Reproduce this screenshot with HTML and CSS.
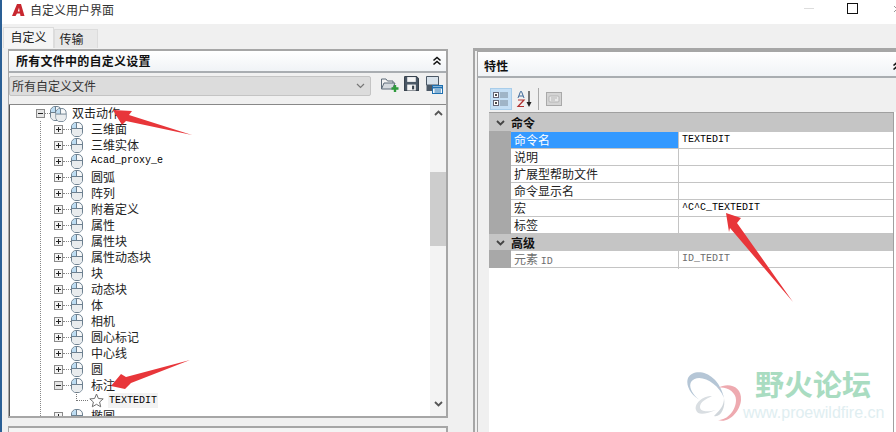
FILE: index.html
```html
<!DOCTYPE html>
<html lang="zh">
<head>
<meta charset="utf-8">
<title>自定义用户界面</title>
<link rel="stylesheet" href="styles.css">
</head>
<body>
<svg class="defs" width="0" height="0">
  <symbol id="mouse" viewBox="0 0 12 15">
    <rect x="0.5" y="0.5" width="11" height="14" rx="4.5" fill="#f7f8f9" stroke="#6d8090"/>
    <path d="M1 6.500V5a4 4 0 0 1 4.500-4V6.500z" fill="#bcdcf2"/>
    <path d="M1 6.500H11V10a4 4 0 0 1-4 4H5a4 4 0 0 1-4-4z" fill="#e9ecee"/>
    <path d="M0.5 6.500H11.500M5.500 1V6.500" stroke="#6d8090" fill="none"/>
  </symbol>
  <symbol id="plus" viewBox="0 0 9 9">
    <rect x="0.5" y="0.5" width="8" height="8" fill="#f4f4f4" stroke="#8a8a8a"/>
    <path d="M2 4.500H7M4.500 2V7" stroke="#222"/>
  </symbol>
  <symbol id="minus" viewBox="0 0 9 9">
    <rect x="0.5" y="0.5" width="8" height="8" fill="#e6e6e6" stroke="#8a8a8a"/>
    <path d="M2 4.500H7" stroke="#222"/>
  </symbol>
  <symbol id="chev2" viewBox="0 0 10 10">
    <path d="M1.500 4.500L5 1.500L8.500 4.500M1.500 8.500L5 5.500L8.500 8.500" fill="none" stroke="#111" stroke-width="1.600"/>
  </symbol>
</svg>

<div class="window">
  <header class="titlebar">
    <svg class="logo" width="13" height="12" viewBox="0 0 13 12"><path d="M0 12L5 0H9L12.500 12H8.500L8 9.500H5L3.500 12zM5.800 7.500H7.600L7 3.500z" fill="#c8272f" fill-rule="evenodd"/></svg>
    <span class="title">自定义用户界面</span>
    <span class="win-controls">
      <span class="win-min"></span>
      <span class="win-max"></span>
      <span class="win-close"></span>
    </span>
  </header>

  <nav class="tabs">
    <span class="tab tab-active">自定义</span>
    <span class="tab tab-other">传输</span>
  </nav>

  <main class="columns">
    <section class="left">
      <div class="panel">
        <div class="panel-head">
          <span>所有文件中的自定义设置</span>
          <svg class="head-chev" width="10" height="10"><use href="#chev2"/></svg>
        </div>
        <div class="combo-row">
          <div class="combo">
            <span>所有自定义文件</span>
            <svg width="9" height="6" viewBox="0 0 9 6"><path d="M1 1L4.500 4.500L8 1" fill="none" stroke="#777" stroke-width="1.200"/></svg>
          </div>
          <svg class="tool tool-open" width="19" height="17" viewBox="0 0 19 17">
            <path d="M1.500 13V3H6L7.500 5H13V7" fill="#f3f3f3" stroke="#5d6b78"/>
            <path d="M1.500 13L4 7H15L12.500 13z" fill="#d5dadf" stroke="#5d6b78"/>
            <path d="M15 9V16M11.500 12.500H18.500" stroke="#2e9a3c" stroke-width="2.400"/>
          </svg>
          <svg class="tool tool-save" width="15" height="15" viewBox="0 0 14 14">
            <path d="M1 .5H11.500L13.500 2.500V13.500H.5V1z" fill="#4b5866" stroke="#39434e"/>
            <rect x="3" y="1" width="8" height="4.500" fill="#f5f5f5"/>
            <rect x="3" y="8" width="8" height="5.500" fill="#f5f5f5"/>
            <rect x="7.500" y="9" width="2" height="3.500" fill="#39434e"/>
          </svg>
          <svg class="tool" width="17" height="18" viewBox="0 0 17 18">
            <path d="M.5.5H12.500V9H.5z" fill="#d9e3ec" stroke="#4b5866"/>
            <path d="M.5 9H7V15H.5z" fill="#4b5866"/>
            <rect x="6.500" y="9.500" width="10" height="8" fill="#f4f8fb" stroke="#1f70b0"/>
            <path d="M7 11.500H16" stroke="#1f70b0" stroke-width="2"/>
            <path d="M8.500 14H15M8.500 16H15" stroke="#1f70b0"/>
          </svg>
        </div>
        <div class="tree-box">
          <div class="tree">
            <div class="root"><svg class="box" width="9" height="9"><use href="#minus"/></svg><i class="dash"></i><span class="root-icon"><svg class="m-back" width="12" height="15"><use href="#mouse"/></svg><svg class="m-front" width="12" height="14"><use href="#mouse"/></svg></span><span class="label">双击动作</span></div>
            <div class="children">
              <div class="node"><svg class="box" width="9" height="9"><use href="#plus"/></svg><i class="dash"></i><svg class="m" width="12" height="15"><use href="#mouse"/></svg><span class="label">三维面</span></div>
              <div class="node"><svg class="box" width="9" height="9"><use href="#plus"/></svg><i class="dash"></i><svg class="m" width="12" height="15"><use href="#mouse"/></svg><span class="label">三维实体</span></div>
              <div class="node"><svg class="box" width="9" height="9"><use href="#plus"/></svg><i class="dash"></i><svg class="m" width="12" height="15"><use href="#mouse"/></svg><span class="label mono">Acad_proxy_e</span></div>
              <div class="node"><svg class="box" width="9" height="9"><use href="#plus"/></svg><i class="dash"></i><svg class="m" width="12" height="15"><use href="#mouse"/></svg><span class="label">圆弧</span></div>
              <div class="node"><svg class="box" width="9" height="9"><use href="#plus"/></svg><i class="dash"></i><svg class="m" width="12" height="15"><use href="#mouse"/></svg><span class="label">阵列</span></div>
              <div class="node"><svg class="box" width="9" height="9"><use href="#plus"/></svg><i class="dash"></i><svg class="m" width="12" height="15"><use href="#mouse"/></svg><span class="label">附着定义</span></div>
              <div class="node"><svg class="box" width="9" height="9"><use href="#plus"/></svg><i class="dash"></i><svg class="m" width="12" height="15"><use href="#mouse"/></svg><span class="label">属性</span></div>
              <div class="node"><svg class="box" width="9" height="9"><use href="#plus"/></svg><i class="dash"></i><svg class="m" width="12" height="15"><use href="#mouse"/></svg><span class="label">属性块</span></div>
              <div class="node"><svg class="box" width="9" height="9"><use href="#plus"/></svg><i class="dash"></i><svg class="m" width="12" height="15"><use href="#mouse"/></svg><span class="label">属性动态块</span></div>
              <div class="node"><svg class="box" width="9" height="9"><use href="#plus"/></svg><i class="dash"></i><svg class="m" width="12" height="15"><use href="#mouse"/></svg><span class="label">块</span></div>
              <div class="node"><svg class="box" width="9" height="9"><use href="#plus"/></svg><i class="dash"></i><svg class="m" width="12" height="15"><use href="#mouse"/></svg><span class="label">动态块</span></div>
              <div class="node"><svg class="box" width="9" height="9"><use href="#plus"/></svg><i class="dash"></i><svg class="m" width="12" height="15"><use href="#mouse"/></svg><span class="label">体</span></div>
              <div class="node"><svg class="box" width="9" height="9"><use href="#plus"/></svg><i class="dash"></i><svg class="m" width="12" height="15"><use href="#mouse"/></svg><span class="label">相机</span></div>
              <div class="node"><svg class="box" width="9" height="9"><use href="#plus"/></svg><i class="dash"></i><svg class="m" width="12" height="15"><use href="#mouse"/></svg><span class="label">圆心标记</span></div>
              <div class="node"><svg class="box" width="9" height="9"><use href="#plus"/></svg><i class="dash"></i><svg class="m" width="12" height="15"><use href="#mouse"/></svg><span class="label">中心线</span></div>
              <div class="node"><svg class="box" width="9" height="9"><use href="#plus"/></svg><i class="dash"></i><svg class="m" width="12" height="15"><use href="#mouse"/></svg><span class="label">圆</span></div>
              <div class="node"><svg class="box" width="9" height="9"><use href="#minus"/></svg><i class="dash"></i><svg class="m" width="12" height="15"><use href="#mouse"/></svg><span class="label">标注</span></div>
              <div class="leaf">
                <i class="elbow"></i>
                <svg width="15" height="15" viewBox="0 0 15 15"><path d="M7.500 1L9.400 5.500L14.200 5.900L10.600 9L11.700 13.800L7.500 11.300L3.300 13.800L4.400 9L.8 5.900L5.600 5.500z" fill="#fff" stroke="#6f6f6f"/></svg>
                <span class="label mono leaf-label">TEXTEDIT</span>
              </div>
              <div class="node"><svg class="box" width="9" height="9"><use href="#plus"/></svg><i class="dash"></i><svg class="m" width="12" height="15"><use href="#mouse"/></svg><span class="label">椭圆</span></div>
            </div>
          </div>
          <div class="scrollbar">
            <svg width="9" height="6" viewBox="0 0 9 6"><path d="M1 5L4.500 1.500L8 5" fill="none" stroke="#555" stroke-width="1.800"/></svg>
            <div class="thumb"></div>
            <svg class="down" width="9" height="6" viewBox="0 0 9 6"><path d="M1 1L4.500 4.500L8 1" fill="none" stroke="#555" stroke-width="1.800"/></svg>
          </div>
        </div>
      </div>
      <div class="panel-next"></div>
    </section>

    <section class="right">
      <div class="panel-head right-head">
        <span>特性</span>
        <svg class="head-chev" width="10" height="10"><use href="#chev2"/></svg>
      </div>
      <div class="right-body">
        <div class="prop-tools">
          <span class="tbtn tbtn-on">
            <svg width="18" height="18" viewBox="0 0 18 18"><rect x="1.500" y="2.500" width="5" height="5" fill="#fff" stroke="#667"/><rect x="1.500" y="10.500" width="5" height="5" fill="#fff" stroke="#667"/><path d="M3 5H5M3 13H5M4 12V14M4 4V6" stroke="#111"/><path d="M8 3H16M8 5H16M8 7H16M8 11H16M8 13H16M8 15H16" stroke="#7b8a99"/></svg>
          </span>
          <span class="tbtn">
            <svg width="18" height="18" viewBox="0 0 18 18"><path d="M14 1V15" stroke="#222" stroke-width="1.200"/><path d="M11.500 12L14 17L16.500 12z" fill="#222"/><path d="M3 8L5.500 1.500H6.500L9 8M4 6H8" stroke="#3f6a9a" fill="none"/><path d="M3 10H9L3 16.500H9" stroke="#b03030" fill="none" stroke-width="1.200"/></svg>
          </span>
          <i class="tsep"></i>
          <span class="tbtn tbtn-off">
            <svg width="16" height="14" viewBox="0 0 16 14"><rect x=".5" y=".5" width="15" height="13" fill="#d4d4d4" stroke="#a9a9a9"/><rect x="3" y="4" width="10" height="6" rx="1" fill="#e8e8e8" stroke="#b5b5b5"/><path d="M5 6H11M5 8H9" stroke="#b5b5b5"/></svg>
          </span>
        </div>
        <div class="grid-area">
          <div class="prop-grid">
            <div class="group first"><svg width="9" height="6" viewBox="0 0 9 6"><path d="M1 1L4.500 4.500L8 1" fill="none" stroke="#444" stroke-width="1.800"/></svg><b>命令</b></div>
            <div class="row selected"><span class="name">命令名</span><span class="val">TEXTEDIT</span></div>
            <div class="row"><span class="name">说明</span><span class="val"></span></div>
            <div class="row"><span class="name">扩展型帮助文件</span><span class="val"></span></div>
            <div class="row"><span class="name">命令显示名</span><span class="val"></span></div>
            <div class="row"><span class="name">宏</span><span class="val">^C^C_TEXTEDIT</span></div>
            <div class="row"><span class="name">标签</span><span class="val"></span></div>
            <div class="group"><svg width="9" height="6" viewBox="0 0 9 6"><path d="M1 1L4.500 4.500L8 1" fill="none" stroke="#444" stroke-width="1.800"/></svg><b>高级</b></div>
            <div class="row readonly"><span class="name">元素 <span class="mono">ID</span></span><span class="val">ID_TEDIT</span></div>
          </div>
        </div>
      </div>
    </section>
  </main>

  <div class="watermark">
    <svg class="butterfly" width="60" height="58" viewBox="0 0 60 58">
      <path d="M2 10C8 -1 32 3 38 30C32 14 12 4 5 14C2 20 8 28 14 32C6 28 -1 18 2 10z" fill="#b5c6d6"/>
      <path d="M32 20C42 14 56 18 55 32C54 44 42 56 32 52C42 52 50 42 50 32C50 24 40 18 32 20z" fill="#eeaab0"/>
      <path d="M26 28C16 28 8 36 10 42C12 48 20 46 30 42C22 44 14 44 14 39C14 34 20 31 26 28z" fill="#d9dee2"/>
      <path d="M38 30C38 38 34 42 28 48C34 50 40 40 38 30z" fill="#d0d6db"/>
    </svg>
    <div class="wm-cn">野火论坛</div>
    <div class="wm-url">www.proewildfire.cn</div>
  </div>

  <svg class="arrows" width="896" height="432" viewBox="0 0 896 432">
    <path d="M113 110L132 111L129 115L192 135L126 121L122 125z" fill="#e8363a"/>
    <path d="M111 386L121 374L126 377L190 360L131 383L125 389z" fill="#e8363a"/>
    <path d="M726 213L741 218L737 223L793 302L730 228L729 232z" fill="#e8363a"/>
  </svg>
</div>
</body>
</html>
```

FILE: styles.css
```css
* { box-sizing: border-box; }
html, body { margin: 0; padding: 0; }
body {
  width: 896px;
  height: 432px;
  overflow: hidden;
  background: #f0f0f0;
  font: 12px/16px "Noto Sans CJK SC", "Liberation Sans", sans-serif;
  color: #222;
}
.defs { position: absolute; }
.mono { font-family: "Liberation Mono", monospace; font-size: 10px; color: #000; }

.window {
  position: relative;
  width: 896px;
  height: 432px;
  border-left: 2px solid #2a5f95;
  display: flex;
  flex-direction: column;
  overflow: hidden;
}

.titlebar {
  height: 24px;
  flex: none;
  background: #fff;
  display: flex;
  align-items: flex-start;
  padding: 3px 0 0 10px;
}
.logo { flex: none; margin: 1px 6px 0 0; }
.title { flex: none; white-space: nowrap; color: #333; margin-left: -1px; margin-top: -3px; line-height: 20px; }
.win-controls { flex: 1; display: flex; align-items: center; justify-content: flex-end; gap: 33px; height: 11px; margin-right: -4px; }
.win-min { flex: none; width: 10px; height: 1px; background: #ddd; }
.win-max { flex: none; width: 11px; height: 11px; border: 1px solid #111; }
.win-close { flex: none; width: 6px; height: 10px; margin-left: 3px; background: linear-gradient(45deg, transparent 46%, #999 46%, #999 54%, transparent 54%), linear-gradient(-45deg, transparent 46%, #999 46%, #999 54%, transparent 54%); }

.tabs {
  height: 24px;
  flex: none;
  display: flex;
  align-items: flex-end;
  padding-left: 1px;
}
.tab {
  width: 44px;
  height: 19px;
  background: #e8e8e8;
  border: 1px solid #dcdcdc;
  border-bottom: 0;
  text-align: center;
  line-height: 18px;
}
.tab-active { width: 51px; height: 21px; background: #f5f5f5; }
.tab-other { padding-right: 9px; }

.columns {
  flex: 1;
  display: flex;
  gap: 25px;
  padding-left: 6px;
  min-height: 0;
}

.left { width: 440px; flex: none; display: flex; flex-direction: column; }
.panel {
  height: 369px;
  border: 1px solid #a6a6a6;
  border-width: 2px 2px 2px 1px;
  display: flex;
  flex-direction: column;
  margin-top: 1px;
}
.panel-next { height: 10px; margin-top: 8px; border-top: 2px solid #a6a6a6; border-left: 1px solid #a6a6a6; border-right: 2px solid #a6a6a6; background: #f4f4f4; }

.panel-head {
  height: 22px;
  flex: none;
  background: linear-gradient(#fff, #f0f3f6);
  border-bottom: 2px solid #a9adb1;
  display: flex;
  align-items: center;
  justify-content: space-between;
  padding: 0 4px 0 7px;
  font-weight: 700;
  color: #111;
  letter-spacing: .25px;
}

.combo-row {
  height: 32px;
  flex: none;
  display: flex;
  align-items: flex-start;
  padding-top: 3px;
  border-bottom: 1px solid #888;
}
.combo {
  flex: none;
  width: 362px;
  height: 20px;
  background: #dcdcdc;
  border: 1px solid #c4c4c4;
  border-radius: 2px;
  display: flex;
  align-items: center;
  justify-content: space-between;
  padding: 0 5px 0 2px;
  margin-right: 9px;
  color: #333;
}
.tool { flex: none; }
.tool-open { margin-right: 5px; }
.tool-save { margin-right: 7px; }

.tree-box { flex: 1; min-height: 0; display: flex; background: #fff; border-left: 1px solid #555; }
.tree { flex: 1; overflow: hidden; }
.scrollbar {
  width: 16px;
  flex: none;
  background: #f3f3f3;
  display: flex;
  flex-direction: column;
  align-items: center;
  padding-top: 5px;
}
.thumb { width: 16px; height: 74px; background: #cdcdcd; margin-top: 56px; }
.down { margin-top: 155px; }

.root { height: 16px; display: flex; align-items: center; padding-left: 26px; }
.box { flex: none; }
.dash { width: 5px; border-top: 1px dotted #888; flex: none; }
.root-icon { position: relative; width: 18px; height: 15px; flex: none; }
.m-back { position: absolute; left: 0; top: 0; }
.m-front { position: absolute; left: 5px; top: 2px; }
.root .label { margin-left: 4px; }

.children { margin-left: 30px; border-left: 1px dotted #888; }
.node { height: 16px; display: flex; align-items: center; padding-left: 14px; margin-left: -1px; }
.node .dash { width: 8px; border-top: 1px dotted #888; }
.m { flex: none; }
.label { margin-left: 8px; white-space: nowrap; }
.leaf { height: 15px; display: flex; align-items: center; padding-left: 48px; position: relative; }
.elbow { position: absolute; left: 35px; top: -1px; width: 12px; height: 9px; border-left: 1px dotted #777; border-bottom: 1px dotted #777; }
.leaf-label { margin-left: 4px; background: #f2f2f2; padding: 0 1px; line-height: 15px; }

.right { flex: 1; display: flex; flex-direction: column; border: 1px solid #a6a6a6; border-width: 3px 0 0 2px; padding-left: 2px; margin-right: -10px; }
.right-head { height: 27px; padding: 3px 4px 0 6px; border-top: 1px solid #a6a6a6; border-left: 1px solid #a6a6a6; }
.right-body { flex: 1; min-height: 0; display: flex; flex-direction: column; border-left: 1px solid #a6a6a6; }

.prop-tools { height: 34px; flex: none; display: flex; align-items: flex-end; padding: 0 0 2px 12px; gap: 1px; }
.tbtn { width: 22px; height: 22px; display: flex; align-items: center; justify-content: center; }
.tbtn-on { background: #c5dff5; border: 1px solid #a8cdea; }
.tbtn-off { margin-left: 3px; }
.tsep { width: 1px; height: 22px; background: #a9a9a9; margin-left: 2px; }

.grid-area { flex: 1; min-height: 0; padding-left: 11px; display: flex; background: linear-gradient(90deg, #f0f0f0 11px, #fff 11px); }
.prop-grid { width: 405px; border-top: 1px solid #a0a0a0; border-right: 1px solid #a0a0a0; }
.group {
  height: 17px;
  background: #c5c5c5;
  display: flex;
  align-items: center;
  color: #111;
}
.group.first { height: 19px; }
.group svg { margin: 0 7px; flex: none; }
.group b { margin-left: -1px; }
.row {
  height: 17px;
  display: grid;
  grid-template-columns: 168px 1fr;
  margin-left: 22px;
  position: relative;
  border-bottom: 1px solid #c4c4c4;
  background: #fff;
}
.row::before { content: ""; position: absolute; left: -22px; top: -1px; bottom: -1px; width: 22px; background: #a8a8a8; }
.name { padding-left: 3px; line-height: 15px; border-right: 1px solid #c4c4c4; white-space: nowrap; }
.val { padding-left: 3px; font: 10px/15px "Liberation Mono", monospace; color: #000; }
.selected .name { background: #3399ff; color: #fff; }
.readonly .name, .readonly .val, .readonly .mono { color: #6e6e6e; }

.watermark {
  position: absolute;
  left: 684px;
  top: 366px;
  width: 210px;
  height: 60px;
}
.butterfly { position: absolute; left: 0; top: 2px; }
.wm-cn { position: absolute; left: 69px; top: 0; font-size: 29px; line-height: 34px; font-weight: 700; color: #a9dcc1; white-space: nowrap; }
.wm-url { position: absolute; left: 57px; top: 37px; font: 16px/20px "Liberation Sans", sans-serif; color: #e0eef1; white-space: nowrap; }

.arrows { position: absolute; left: -2px; top: 0; pointer-events: none; }
```
